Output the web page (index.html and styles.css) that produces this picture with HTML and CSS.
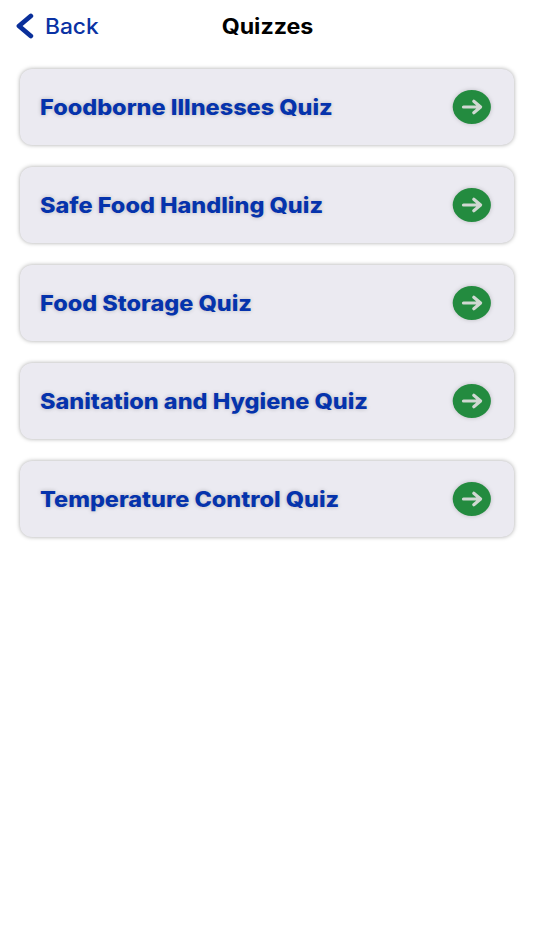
FILE: index.html
```html
<!DOCTYPE html>
<html lang="en">
<head>
<meta charset="utf-8">
<title>Quizzes</title>
<link rel="stylesheet" href="styles.css">
</head>
<body>
<header class="nav">
  <a class="back"><svg class="chevron" viewBox="0 0 18 26"><path d="M14.8 3 3 13 14.8 23"/></svg><span class="back-label">Back</span></a>
  <h1 class="title">Quizzes</h1>
</header>
<main class="list">
  <a class="card"><span class="name">Foodborne Illnesses Quiz</span><svg class="go" viewBox="0 0 40 36"><ellipse cx="19.8" cy="18" rx="19.1" ry="17"/><path d="M11.5 18H28M21.8 12.2 28.6 18 21.8 23.8"/></svg></a>
  <a class="card"><span class="name">Safe Food Handling Quiz</span><svg class="go" viewBox="0 0 40 36"><ellipse cx="19.8" cy="18" rx="19.1" ry="17"/><path d="M11.5 18H28M21.8 12.2 28.6 18 21.8 23.8"/></svg></a>
  <a class="card"><span class="name">Food Storage Quiz</span><svg class="go" viewBox="0 0 40 36"><ellipse cx="19.8" cy="18" rx="19.1" ry="17"/><path d="M11.5 18H28M21.8 12.2 28.6 18 21.8 23.8"/></svg></a>
  <a class="card"><span class="name">Sanitation and Hygiene Quiz</span><svg class="go" viewBox="0 0 40 36"><ellipse cx="19.8" cy="18" rx="19.1" ry="17"/><path d="M11.5 18H28M21.8 12.2 28.6 18 21.8 23.8"/></svg></a>
  <a class="card"><span class="name">Temperature Control Quiz</span><svg class="go" viewBox="0 0 40 36"><ellipse cx="19.8" cy="18" rx="19.1" ry="17"/><path d="M11.5 18H28M21.8 12.2 28.6 18 21.8 23.8"/></svg></a>
</main>
</body>
</html>
```
FILE: styles.css
```css
* { box-sizing: border-box; }
body { margin: 0; min-height: 950px; background: #fff; font-family: Inter, "Liberation Sans", sans-serif; }
.nav { display: grid; grid-template-columns: 1fr auto 1fr; align-items: center; height: 52px; padding: 0 16px; }
.back { display: flex; align-items: center; color: #0a32a4; }
.chevron { width: 18px; height: 26px; fill: none; stroke: #0a2f9a; stroke-width: 4.8; stroke-linecap: round; stroke-linejoin: round; }
.back-label { margin-left: 11px; font-size: 21px; font-weight: 500; line-height: 26px; transform: translateY(1px) scaleX(1.083); transform-origin: left; }
.title { margin: 0; font-size: 21px; font-weight: 700; line-height: 26px; color: #000; transform: translateY(1px) scaleX(1.105); }
.list { display: flex; flex-direction: column; gap: 22px; padding: 17px 20px; }
.card { display: flex; align-items: center; justify-content: space-between; height: 76px; padding: 0 22px 0 20px; border-radius: 12px; background: #ebeaf1; box-shadow: 0 0 4px rgba(0,0,0,.34); }
.name { color: #0533ac; font-size: 21px; font-weight: 800; line-height: 28px; white-space: nowrap; text-shadow: 0 0 4px rgba(0,0,0,.22); transform: translateY(1px) scaleX(1.117); transform-origin: left; }
.go { width: 40px; height: 36px; filter: drop-shadow(0 0 2px rgba(0,0,0,.2)); }
.go ellipse { fill: #238b3f; }
.go path { fill: none; stroke: #d0d8d2; stroke-width: 3.2; stroke-linecap: round; stroke-linejoin: round; }
```
